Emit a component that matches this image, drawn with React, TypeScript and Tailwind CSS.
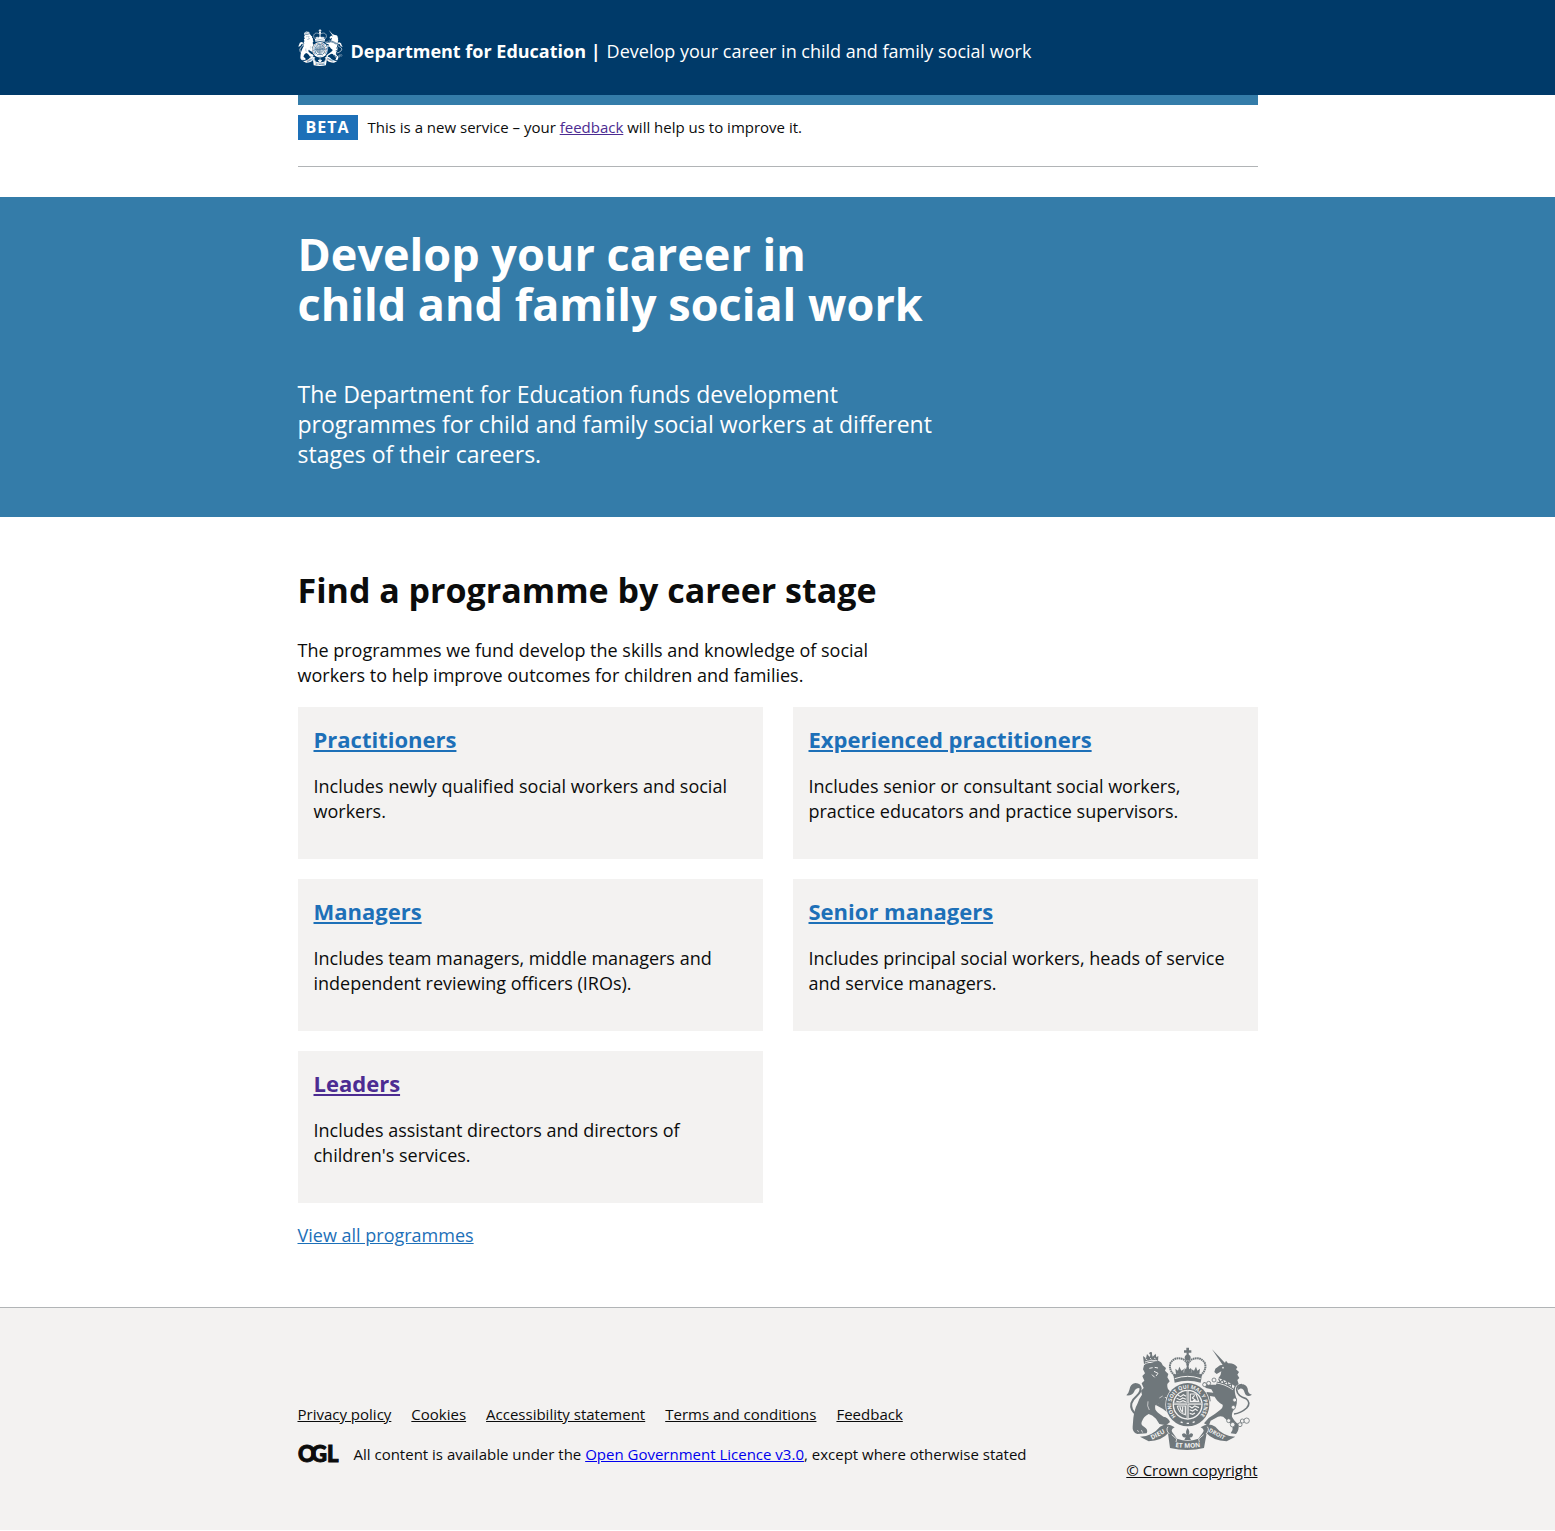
import React from "react";

type CrestProps = { ink: string; paper: string; className: string };

function Crest({ ink, paper, className }: CrestProps) {
  const ring = React.useId();
  const ribbon = React.useId();
  return (
    <svg viewBox="50 37 378 309" className={className} aria-hidden="true" fill={ink}>
      {/* lion */}
      <path d="M104 92Q112 83 124 85L146 78Q158 82 160 92L170 100L167 108L177 118L174 128L181 140L174 148Q172 162 182 170L187 182L178 198L171 188Q162 184 160 196Q152 208 138 212Q134 226 146 234L162 246Q177 248 182 262L170 272L150 268L140 252Q128 240 118 238Q102 246 97 262Q94 272 104 276Q118 284 112 296L84 298Q68 292 70 276L72 250Q76 222 84 208Q90 190 98 180L95 168L103 160L97 146L105 138L99 124L107 116L101 104Z" />
      <path d="M138 210Q156 204 164 186L182 200L176 216L188 226L178 236L160 222Z" />
      <path d="M82 240Q62 226 66 206Q70 194 82 184Q98 170 92 156" fill="none" stroke={ink} strokeWidth="6" />
      <path d="M97 162Q96 146 78 145Q62 148 60 166Q58 176 51 182Q68 184 74 172Q78 160 90 160Z" />
      <path d="M104 88L101 64L110 71L113 58L121 67L126 52L130 66L139 57L141 68L147 64L146 82Q124 78 104 88Z" />
      <circle cx="124" cy="56" r="4" />
      <path d="M107 82Q124 74 144 78M108 72L114 76M122 70L126 74M134 70L139 73" fill="none" stroke={paper} strokeWidth="2.5" />
      <path d="M120 101L130 99M136 98L146 100M134 110L146 116L140 124M128 120L136 128" fill="none" stroke={paper} strokeWidth="3" />
      <path d="M150 190L160 184M84 286L88 292M96 286L100 294M120 226Q112 214 116 200" fill="none" stroke={paper} strokeWidth="2" />
      {/* unicorn */}
      <path d="M308 44L350 88L342 94Z" />
      <path d="M344 90L350 78L356 86Q374 84 384 98L380 104L389 112L384 120L390 130L384 136L388 148L380 154Q374 164 378 180Q388 206 376 222Q366 234 368 246Q376 262 388 268Q390 286 380 298L364 296Q372 286 370 274L348 252Q340 242 326 246L304 258L298 274L284 266L298 250Q318 238 332 226Q342 218 340 210Q324 202 316 186L302 184L304 200L292 202L286 184L292 172L312 174L306 164L290 160L280 150L284 142L298 150L320 150L326 132Q336 122 336 110L322 118L315 112L318 102L332 92Z" />
      <path d="M374 238Q394 236 412 220Q426 204 410 192Q384 184 382 166Q382 150 398 150" fill="none" stroke={ink} strokeWidth="5" />
      <path d="M386 166Q384 148 402 149Q416 154 416 170Q420 180 428 180Q412 190 406 174Q402 160 392 162Z" />
      <path d="M324 130Q346 134 376 154L370 166Q346 150 320 146Z" fill={paper} />
      <path d="M322 142Q348 146 371 162M328 132L332 142L340 135L344 146L354 140L356 152L367 147L366 157" fill="none" stroke={ink} strokeWidth="3.5" />
      <circle cx="341" cy="99" r="2.5" fill={paper} />
      <g fill={paper} stroke={ink} strokeWidth="2.5">
        <circle cx="286" cy="150" r="6" />
        <circle cx="298" cy="146" r="6" />
        <circle cx="314" cy="136" r="6" />
        <circle cx="376" cy="196" r="6" />
        <circle cx="372" cy="218" r="6" />
        <circle cx="358" cy="258" r="6" />
        <circle cx="370" cy="270" r="7" />
        <circle cx="392" cy="270" r="6" />
        <circle cx="399" cy="259" r="6" />
        <circle cx="412" cy="258" r="8" />
      </g>
      {/* garter and shield */}
      <circle cx="235" cy="210" r="67" fill={paper} />
      <circle cx="235" cy="210" r="65" />
      <circle cx="235" cy="210" r="45" fill={paper} />
      <circle cx="235" cy="210" r="41" />
      <path d="M235 168V252M193 207H277" stroke={paper} strokeWidth="6" />
      <path d="M235 168V252M193 207H277" stroke={ink} strokeWidth="1.5" />
      <g fill="none" stroke={paper} strokeWidth="3.5">
        <path d="M206 182L214 186L222 180L230 185M202 191L212 195L220 190L230 194M201 200L212 202L221 198L230 202" />
        <path d="M240 214L248 220L256 214L269 219M241 225L250 229L258 223L265 228M241 236L250 239L257 235" />
        <path d="M243 178H260L268 200H243ZM256 182L249 190L258 196L251 198" />
        <path d="M204 214H228V240Q208 236 204 214M212 216Q212 226 222 234M220 216V230" />
      </g>
      <path id={ring} d="M200 245A49 49 0 1 1 270 245" fill="none" />
      <text fill={paper} fontSize="16" fontWeight="700" fontFamily='"Open Sans", sans-serif'>
        <textPath href={`#${ring}`}>HONI SOIT QUI MAL Y PENSE</textPath>
      </text>
      <path d="M214 262L220 264M232 266H239M250 264L256 261" stroke={paper} strokeWidth="4" />
      {/* royal crown */}
      <path d="M196 144L192 120Q235 104 278 120L274 144Q235 132 196 144Z" />
      <path d="M196 132Q235 118 274 132" fill="none" stroke={paper} strokeWidth="3" />
      <g fill="none" stroke={ink} strokeWidth="6" strokeDasharray="5 1.5">
        <path d="M196 122Q176 104 184 84Q198 64 222 74Q232 80 235 92" />
        <path d="M274 122Q294 104 286 84Q272 64 248 74Q238 80 235 92" />
        <path d="M235 78V116" />
      </g>
      <path d="M200 118L198 102L206 108L210 96L216 108L224 103L222 116ZM224 114L226 100L230 104L235 90L240 104L245 100L247 114ZM248 116L246 103L254 108L260 96L264 108L272 102L270 118Z" />
      <circle cx="235" cy="69" r="9" />
      <path d="M231 64L232 54H224V47H231V39H239V47H246V54H238L239 64Z" />
      {/* fleur-de-lis */}
      <path d="M235 280Q243 291 238 301Q245 291 251 299Q251 310 241 308L245 316H225L229 308Q218 310 218 299Q225 291 232 301Q227 291 235 280Z" />
      {/* motto ribbon */}
      <path d="M92 306Q130 304 152 276Q174 262 196 278Q182 284 190 294L203 312Q235 324 267 312L280 294Q288 284 274 278Q296 262 318 276Q340 304 378 306L352 320Q310 318 292 296L284 340Q235 352 182 340L176 296Q158 318 118 320Z" />
      <path d="M176 276Q168 286 180 298M294 276Q302 286 290 298M187 300L202 313L200 322M283 300L268 313L270 322" fill="none" stroke={paper} strokeWidth="2.5" />
      <path id={ribbon} d="M187 335Q235 344 284 335" fill="none" />
      <g fill={paper} fontSize="19" fontWeight="700" fontFamily='"Open Sans", sans-serif'>
        <text>
          <textPath href={`#${ribbon}`} startOffset="50%" textAnchor="middle">ET MON</textPath>
        </text>
        <text x="148" y="305" textAnchor="middle" transform="rotate(-27 148 305)">DIEU</text>
        <text x="320" y="303" textAnchor="middle" fontSize="17" transform="rotate(28 320 303)">DROIT</text>
      </g>
    </svg>
  );
}

const stages = [
  { name: "Practitioners", text: "Includes newly qualified social workers and social workers.", visited: false },
  { name: "Experienced practitioners", text: "Includes senior or consultant social workers, practice educators and practice supervisors.", visited: false },
  { name: "Managers", text: "Includes team managers, middle managers and independent reviewing officers (IROs).", visited: false },
  { name: "Senior managers", text: "Includes principal social workers, heads of service and service managers.", visited: false },
  { name: "Leaders", text: "Includes assistant directors and directors of children's services.", visited: true },
];

const footerLinks = ["Privacy policy", "Cookies", "Accessibility statement", "Terms and conditions", "Feedback"];

const container = "mx-auto w-full max-w-[960px]";

export default function App() {
  return (
    <div className="bg-white font-['Open_Sans','Noto_Sans',sans-serif] text-[18px] leading-[25px] text-[#0b0c0c]">
      <header className="bg-[#003a69]">
        <div className={`${container} flex items-center py-7 text-white`}>
          <a href="#" className="flex items-center gap-2 font-bold">
            <Crest ink="#ffffff" paper="#003a69" className="h-[39px] w-[45px]" />
            <span className="pt-2">Department for Education |</span>
          </a>
          <a href="#" className="ml-1.5 pt-2">Develop your career in child and family social work</a>
        </div>
      </header>

      <div className={container}>
        <div className="h-[10px] bg-[#347ca9]" />
        <div className="flex items-center border-b border-[#b1b4b6] pt-[10px] pb-[26px] text-[15px]">
          <strong className="mr-[10px] bg-[#1d70b8] px-2 text-[16px] tracking-[1px] text-white">BETA</strong>
          <span>
            This is a new service – your <a href="#" className="text-[#4c2c92] underline">feedback</a> will help us to improve it.
          </span>
        </div>
      </div>

      <main>
        <section className="mt-[30px] bg-[#347ca9] pt-8 pb-12 text-white">
          <div className={container}>
            <h1 className="text-[45px] leading-[50px] font-bold">
              Develop your career in
              <br />
              child and family social work
            </h1>
            <p className="mt-[50px] max-w-[640px] text-[23px] leading-[30px]">
              The Department for Education funds development programmes for child and family social workers at different stages of their careers.
            </p>
          </div>
        </section>

        <section className={`${container} pt-[53px] pb-[59px]`}>
          <h2 className="text-[34px] leading-[40px] font-bold">Find a programme by career stage</h2>
          <p className="mt-[28px] mb-[19px] max-w-[610px]">
            The programmes we fund develop the skills and knowledge of social workers to help improve outcomes for children and families.
          </p>
          <div className="grid grid-cols-2 gap-x-[30px] gap-y-5">
            {stages.map((s) => (
              <article key={s.name} className="bg-[#f3f2f1] px-4 pt-[17px] pb-[35px]">
                <h3 className="text-[22px] leading-[30px] font-bold">
                  <a href="#" className={`underline ${s.visited ? "text-[#4c2c92]" : "text-[#1d70b8]"}`}>{s.name}</a>
                </h3>
                <p className="mt-5">{s.text}</p>
              </article>
            ))}
          </div>
          <p className="mt-5">
            <a href="#" className="text-[#1d70b8] underline">View all programmes</a>
          </p>
        </section>
      </main>

      <footer className="border-t border-[#b1b4b6] bg-[#f3f2f1] pt-[39px] pb-[47px] text-[15px]">
        <div className={`${container} flex items-end justify-between`}>
          <div className="pb-4">
            <ul className="flex gap-5">
              {footerLinks.map((l) => (
                <li key={l}>
                  <a href="#" className="underline">{l}</a>
                </li>
              ))}
            </ul>
            <div className="mt-[15px] flex items-center">
              <svg viewBox="0 0 41 18" className="mr-[15px] h-[18px] w-[41px] overflow-visible" role="img" aria-label="Open Government Licence">
                <text x="0 13 29" y="16" fontSize="22" fontWeight="900" fontFamily="Lato, sans-serif" fill="#0b0c0c" stroke="#0b0c0c" strokeWidth="1">OGL</text>
              </svg>
              <span>
                All content is available under the <a href="#" className="text-[#0000ee] underline">Open Government Licence v3.0</a>, except where otherwise stated
              </span>
            </div>
          </div>
          <a href="#" className="flex flex-col items-start gap-2 underline">
            <Crest ink="#6f777b" paper="#f3f2f1" className="h-[103px] w-[126px]" />
            <span>© Crown copyright</span>
          </a>
        </div>
      </footer>
    </div>
  );
}
